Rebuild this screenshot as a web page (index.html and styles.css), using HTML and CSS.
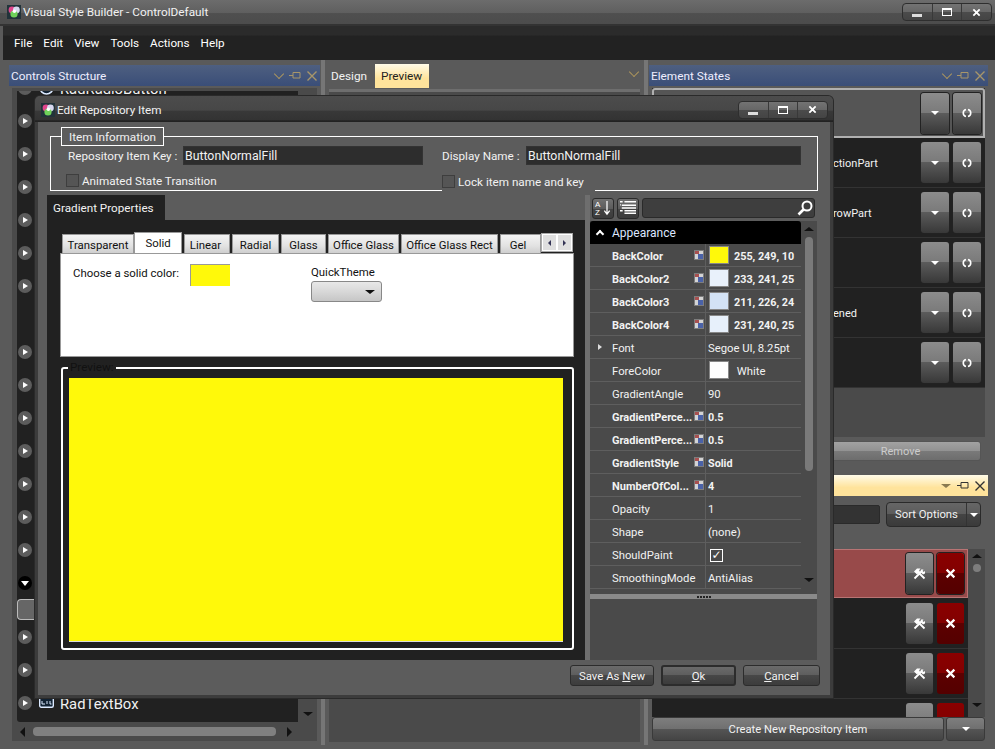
FILE: index.html
```html
<!DOCTYPE html>
<html lang="en">
<head>
<meta charset="UTF-8" />
<title>Visual Style Builder - ControlDefault</title>
<link rel="stylesheet" href="styles.css">
</head>
<body>
  <svg class="sprite" aria-hidden="true">
    <symbol id="i-logo" viewBox="0 0 14 14">
      <rect width="14" height="14" fill="#22333a"/>
      <circle cx="5" cy="5" r="3.4" fill="#e0458c"/>
      <circle cx="9.4" cy="5" r="3.4" fill="#d8d8f0"/>
      <circle cx="7" cy="9" r="3.6" fill="#6fd25a"/>
      <circle cx="7.4" cy="6.2" r="1.8" fill="#ffffff"/>
    </symbol>
    <symbol id="i-refresh" viewBox="0 0 10 10">
      <path d="M4 1.5 A3.6 3.6 0 0 0 4 8.5 M6 1.5 A3.6 3.6 0 0 1 6 8.5" fill="none" stroke="#fff" stroke-width="1.6"/>
    </symbol>
    <symbol id="i-tools" viewBox="0 0 13 12">
      <path d="M1.5 10.5 9 3M4.5 3.5 11.5 10.5" stroke="#fff" stroke-width="1.8" fill="none"/>
      <path d="M1 3.5 4 0.5H7.5L6 2.5 7 3.5 4 6.5Z" fill="#fff"/>
      <path d="M8 1.5H10.5L9.5 3 10.5 4 12 3V5.5L10 6.5 7.5 4Z" fill="#fff"/>
    </symbol>
    <symbol id="i-close" viewBox="0 0 10 10">
      <path d="M1.5 1.5 8.5 8.5M8.5 1.5 1.5 8.5" stroke="#fff" stroke-width="2" fill="none"/>
    </symbol>
    <symbol id="i-flag" viewBox="0 0 10 10">
      <rect x="0" y="0" width="10" height="10" fill="#7d7d7d"/>
      <rect x="1" y="1" width="8" height="8" fill="#d4d4d4"/>
      <rect x="1" y="1" width="4" height="3" fill="#a85050"/>
      <rect x="4" y="4" width="5" height="5" fill="#4a62a8"/>
    </symbol>
    <symbol id="i-pin" viewBox="0 0 12 9">
      <path d="M0 4.5H4M4 1.5H11V7H4Z" fill="none" stroke="currentColor"/>
    </symbol>
    <symbol id="i-x" viewBox="0 0 10 10">
      <path d="M0.5 0.5 9.5 9.5M9.5 0.5 0.5 9.5" fill="none" stroke="currentColor" stroke-width="1.4"/>
    </symbol>
    <symbol id="i-search" viewBox="0 0 16 16">
      <circle cx="10" cy="6" r="4.5" fill="none" stroke="#fff" stroke-width="2"/>
      <path d="M6.5 9.5 1.5 14.5" stroke="#fff" stroke-width="2.6"/>
    </symbol>
    <symbol id="i-cats" viewBox="0 0 20 18">
      <path d="M1 2H4M6 2H19M3 6H19M3 9H19M1 5.5H2M6 12H19M6 15H19M1 12H4" stroke="#fff" stroke-width="1.6" fill="none"/>
    </symbol>
    <symbol id="i-box" viewBox="0 0 15 11">
      <rect x="0.7" y="0.7" width="13.6" height="9.6" rx="1.5" fill="#123" stroke="#dbe9ff" stroke-width="1.4"/>
      <path d="M3 4V7H6M8 4V7M11 4V7H12.5" fill="none" stroke="#dbe9ff"/>
    </symbol>
    <symbol id="i-radio" viewBox="0 0 15 15">
      <circle cx="7.5" cy="7.5" r="6.5" fill="#123" stroke="#dbe9ff" stroke-width="1.6"/>
      <circle cx="7.5" cy="7.5" r="3" fill="#4a90d8"/>
    </symbol>
  </svg>

  <div class="app">
    <header class="titlebar">
      <svg class="logo"><use href="#i-logo"/></svg>
      <span class="title-text">Visual Style Builder - ControlDefault</span>
      <div class="winbtns">
        <span class="winbtn"><i class="glyph-min"></i></span>
        <span class="winbtn"><i class="glyph-max"></i></span>
        <span class="winbtn"><svg class="glyph-close"><use href="#i-close"/></svg></span>
      </div>
    </header>

    <nav class="menubar">
      <span>File</span><span>Edit</span><span>View</span><span>Tools</span><span>Actions</span><span>Help</span>
    </nav>

    <main class="workspace">
      <section class="panel panel-left">
        <div class="dock-head">
          <span>Controls Structure</span>
          <span class="dock-tools"><i class="chev"></i><svg class="pin"><use href="#i-pin"/></svg><svg class="xmark"><use href="#i-x"/></svg></span>
        </div>
        <div class="pane">
          <div class="tree-wrap">
            <div class="tree">
              <div class="tree-row"><i class="expander"></i><svg class="tree-icon radio"><use href="#i-radio"/></svg><span>RadRadioButton</span></div>
              <div class="tree-row"><i class="expander"></i></div>
              <div class="tree-row"><i class="expander"></i></div>
              <div class="tree-row"><i class="expander"></i></div>
              <div class="tree-row"><i class="expander"></i></div>
              <div class="tree-row"><i class="expander"></i></div>
              <div class="tree-row"><i class="expander"></i></div>
              <div class="tree-row"></div>
              <div class="tree-row"><i class="expander"></i></div>
              <div class="tree-row"><i class="expander"></i></div>
              <div class="tree-row"><i class="expander"></i></div>
              <div class="tree-row"><i class="expander"></i></div>
              <div class="tree-row"><i class="expander"></i></div>
              <div class="tree-row"><i class="expander"></i></div>
              <div class="tree-row"><i class="expander"></i></div>
              <div class="tree-row"><i class="expander open"></i></div>
              <div class="tree-row short"><i class="tree-sel"></i></div>
              <div class="tree-row"><i class="expander"></i></div>
              <div class="tree-row"><i class="expander"></i></div>
              <div class="tree-row"><i class="expander"></i><svg class="tree-icon"><use href="#i-box"/></svg><span>RadTextBox</span></div>
            </div>
            <div class="tree-scroll"><i class="arrow-down dark"></i></div>
          </div>
          <div class="hscroll"><i class="arrow-left"></i><i class="hthumb"></i><i class="arrow-right"></i></div>
        </div>
      </section>
      <div class="splitter"></div>

      <section class="panel panel-center">
        <div class="doc-tabs">
          <span class="doc-tab">Design</span>
          <span class="doc-tab active">Preview</span>
          <i class="chev doc-chev"></i>
        </div>
        <div class="doc-pane"></div>
      </section>
      <div class="splitter"></div>

      <section class="panel panel-right">
        <div class="dock-head">
          <span>Element States</span>
          <span class="dock-tools"><i class="chev"></i><svg class="pin"><use href="#i-pin"/></svg><svg class="xmark"><use href="#i-x"/></svg></span>
        </div>
        <div class="states">
          <div class="state-row selected"><span class="state-name"></span><span class="tile"><i class="arrow-white"></i></span><span class="tile"><svg class="ico-refresh"><use href="#i-refresh"/></svg></span></div>
          <div class="state-row"><span class="state-name">ctionPart</span><span class="tile"><i class="arrow-white"></i></span><span class="tile"><svg class="ico-refresh"><use href="#i-refresh"/></svg></span></div>
          <div class="state-row"><span class="state-name">rowPart</span><span class="tile"><i class="arrow-white"></i></span><span class="tile"><svg class="ico-refresh"><use href="#i-refresh"/></svg></span></div>
          <div class="state-row"><span class="state-name"></span><span class="tile"><i class="arrow-white"></i></span><span class="tile"><svg class="ico-refresh"><use href="#i-refresh"/></svg></span></div>
          <div class="state-row"><span class="state-name">ened</span><span class="tile"><i class="arrow-white"></i></span><span class="tile"><svg class="ico-refresh"><use href="#i-refresh"/></svg></span></div>
          <div class="state-row"><span class="state-name"></span><span class="tile"><i class="arrow-white"></i></span><span class="tile"><svg class="ico-refresh"><use href="#i-refresh"/></svg></span></div>
        </div>
        <div class="states-foot"></div>
        <span class="remove-btn">Remove</span>

        <div class="dock-head cream">
          <span></span>
          <span class="dock-tools"><i class="arrow-down gold"></i><svg class="pin"><use href="#i-pin"/></svg><svg class="xmark"><use href="#i-x"/></svg></span>
        </div>
        <div class="sort-bar">
          <span class="sort-input"></span>
          <span class="sort-btn"><span class="sort-label">Sort Options</span><span class="sort-drop"><i class="arrow-white"></i></span></span>
        </div>
        <div class="repo">
          <div class="repo-list">
            <div class="repo-row selected"><span class="repo-name"></span><span class="tile tool"><svg class="ico-tools"><use href="#i-tools"/></svg></span><span class="tile del"><svg class="ico-del"><use href="#i-close"/></svg></span></div>
            <div class="repo-row"><span class="repo-name"></span><span class="tile tool"><svg class="ico-tools"><use href="#i-tools"/></svg></span><span class="tile del"><svg class="ico-del"><use href="#i-close"/></svg></span></div>
            <div class="repo-row"><span class="repo-name"><i class="sliver"></i></span><span class="tile tool"><svg class="ico-tools"><use href="#i-tools"/></svg></span><span class="tile del"><svg class="ico-del"><use href="#i-close"/></svg></span></div>
            <div class="repo-row"><span class="repo-name"><i class="peach"></i></span><span class="tile tool"></span><span class="tile del"></span></div>
          </div>
          <div class="repo-scroll"><i class="arrow-up dark"></i><i class="repo-thumb"></i><i class="arrow-down dark end"></i></div>
        </div>
        <div class="create-bar">
          <span class="create-btn">Create New Repository Item</span>
          <span class="create-drop"><i class="arrow-white"></i></span>
        </div>
      </section>
    </main>

    <section class="dialog" aria-label="Edit Repository Item">
      <div class="dialog-title">
        <svg class="logo"><use href="#i-logo"/></svg>
        <span>Edit Repository Item</span>
        <div class="winbtns">
          <span class="winbtn"><i class="glyph-min"></i></span>
          <span class="winbtn"><i class="glyph-max"></i></span>
          <span class="winbtn"><svg class="glyph-close"><use href="#i-close"/></svg></span>
        </div>
      </div>
      <div class="dialog-body">
        <div class="group">
          <span class="legend">Item Information</span>
          <div class="group-row">
            <label class="lbl-key">Repository Item Key :</label>
            <span class="field field-key">ButtonNormalFill</span>
            <label class="lbl-name">Display Name :</label>
            <span class="field field-name">ButtonNormalFill</span>
          </div>
          <div class="group-row checks">
            <span class="check-item first"><i class="check"></i>Animated State Transition</span>
            <span class="check-item lock"><i class="check"></i>Lock item name and key</span>
          </div>
        </div>

        <div class="editor">
          <div class="grad-side">
            <div class="grad-tabhead"><span>Gradient Properties</span></div>
            <div class="grad-panel">
              <div class="tabs">
                <span class="tab w-transparent">Transparent</span>
                <span class="tab active w-solid">Solid</span>
                <span class="tab w-linear">Linear</span>
                <span class="tab w-radial">Radial</span>
                <span class="tab w-glass">Glass</span>
                <span class="tab w-office">Office Glass</span>
                <span class="tab w-rect">Office Glass Rect</span>
                <span class="tab w-gel">Gel</span>
                <span class="tab-nav"><i><b class="tri-l"></b></i><i><b class="tri-r"></b></i></span>
              </div>
              <div class="tab-page">
                <div class="solid-pick"><span>Choose a solid color:</span><i class="swatch-big"></i></div>
                <div class="quick">
                  <span>QuickTheme</span>
                  <span class="combo"><i class="arrow-down dark"></i></span>
                </div>
              </div>
              <div class="preview">
                <span class="preview-legend">Preview:</span>
                <div class="preview-fill"></div>
              </div>
            </div>
          </div>

          <div class="grid-side">
            <div class="grid-tools">
              <span class="tool-btn">
                <svg viewBox="0 0 20 18">
                  <text x="1" y="8" font-size="9" font-family="Liberation Sans" fill="#fff">A</text>
                  <text x="1" y="17" font-size="9" font-family="Liberation Sans" fill="#fff">Z</text>
                  <path d="M14.5 1V15M11.5 12 14.5 16 17.5 12" fill="none" stroke="#fff" stroke-width="1.4"/>
                </svg>
              </span>
              <span class="tool-btn"><svg><use href="#i-cats"/></svg></span>
              <span class="grid-search"><svg><use href="#i-search"/></svg></span>
            </div>
            <div class="grid-main">
              <div class="grid-rows">
                <div class="cat"><i class="cat-caret"></i>Appearance</div>
                <div class="prop bold"><span class="p-name">BackColor</span><svg class="flag"><use href="#i-flag"/></svg><span class="p-val"><i class="sw c-yellow"></i>255, 249, 10</span></div>
                <div class="prop bold"><span class="p-name">BackColor2</span><svg class="flag"><use href="#i-flag"/></svg><span class="p-val"><i class="sw c-b2"></i>233, 241, 25</span></div>
                <div class="prop bold"><span class="p-name">BackColor3</span><svg class="flag"><use href="#i-flag"/></svg><span class="p-val"><i class="sw c-b3"></i>211, 226, 24</span></div>
                <div class="prop bold"><span class="p-name">BackColor4</span><svg class="flag"><use href="#i-flag"/></svg><span class="p-val"><i class="sw c-b4"></i>231, 240, 25</span></div>
                <div class="prop"><i class="prop-caret"></i><span class="p-name">Font</span><span class="p-val">Segoe UI, 8.25pt</span></div>
                <div class="prop"><span class="p-name">ForeColor</span><span class="p-val"><i class="sw c-white"></i>&nbsp;White</span></div>
                <div class="prop"><span class="p-name">GradientAngle</span><span class="p-val">90</span></div>
                <div class="prop bold"><span class="p-name">GradientPerce...</span><svg class="flag"><use href="#i-flag"/></svg><span class="p-val">0.5</span></div>
                <div class="prop bold"><span class="p-name">GradientPerce...</span><svg class="flag"><use href="#i-flag"/></svg><span class="p-val">0.5</span></div>
                <div class="prop bold"><span class="p-name">GradientStyle</span><svg class="flag"><use href="#i-flag"/></svg><span class="p-val">Solid</span></div>
                <div class="prop bold"><span class="p-name">NumberOfCol...</span><svg class="flag"><use href="#i-flag"/></svg><span class="p-val">4</span></div>
                <div class="prop"><span class="p-name">Opacity</span><span class="p-val">1</span></div>
                <div class="prop"><span class="p-name">Shape</span><span class="p-val">(none)</span></div>
                <div class="prop"><span class="p-name">ShouldPaint</span><span class="p-val"><i class="tick">&#10003;</i></span></div>
                <div class="prop"><span class="p-name">SmoothingMode</span><span class="p-val">AntiAlias</span></div>
              </div>
              <div class="grid-scroll"><i class="arrow-up dark"></i><i class="grid-thumb"></i><i class="arrow-down dark end"></i></div>
            </div>
            <div class="grid-split"><i></i><i></i><i></i><i></i><i></i></div>
          </div>
        </div>

        <div class="dialog-foot">
          <span class="dlg-btn w-save">Save As <u>N</u>ew</span>
          <span class="dlg-btn w-ok"><u>O</u>k</span>
          <span class="dlg-btn w-cancel"><u>C</u>ancel</span>
        </div>
      </div>
    </section>
  </div>
</body>
</html>
```

FILE: styles.css
```css
/* Base */
*, *::before, *::after {
  box-sizing: border-box;
}
html, body {
  margin: 0;
  padding: 0;
  width: 995px;
  height: 749px;
  overflow: hidden;
  font-family: Roboto, "Noto Sans", sans-serif;
  font-size: 11.7px;
  color: #f2f2f2;
  background: #5a5a5a;
}
i {
  display: block;
  font-style: normal;
}
.sprite {
  position: absolute;
  width: 0;
  height: 0;
}
.app {
  position: relative;
  width: 995px;
  height: 749px;
  display: flex;
  flex-direction: column;
}

/* Title bar */
.titlebar {
  height: 26px;
  flex: none;
  display: flex;
  align-items: center;
  padding: 0 3px 2px 7px;
  font-size: 11.8px;
  background: linear-gradient(#6c6c6c, #5f5f5f 50%, #4f4f4f 52%, #4c4c4c 92%, #333 94%);
}
.logo {
  width: 14px;
  height: 14px;
  margin-right: 2px;
  flex: none;
}
.title-text {
  flex: 1;
}
.winbtns {
  display: flex;
  width: 90px;
  height: 18px;
  border: 1px solid #2e2e2e;
  border-radius: 4px;
  background: linear-gradient(#737373, #666 50%, #4b4b4b 52%, #444);
  overflow: hidden;
}
.winbtn {
  flex: 1;
  display: flex;
  align-items: center;
  justify-content: center;
  border-right: 1px solid #393939;
}
.winbtn:last-child {
  border-right: 0;
}
.glyph-min {
  width: 10px;
  height: 3px;
  margin-top: 7px;
  background: #ddd;
}
.glyph-max {
  width: 10px;
  height: 8px;
  border: 1px solid #fff;
  border-top-width: 2px;
}
.glyph-close {
  width: 9px;
  height: 9px;
}

/* Menu */
.menubar {
  height: 34px;
  flex: none;
  display: flex;
  align-items: center;
  gap: 11px;
  padding: 0 0 0 11px;
  margin-left: 3px;
  font-size: 11.7px;
  background: linear-gradient(#2b2b2b 26%, #222 30%);
  color: #fff;
}

/* Docked panels */
.workspace {
  flex: 1;
  display: flex;
  min-height: 0;
}
.panel {
  display: flex;
  flex-direction: column;
  padding-top: 5px;
}
.panel-left {
  width: 321px;
  padding-left: 9px;
  padding-right: 1px;
}
.panel-center {
  width: 319px;
  padding-top: 4px;
}
.panel-right {
  flex: 1;
  padding-left: 1px;
  padding-right: 7px;
}
.splitter {
  width: 4px;
  height: 685px;
  flex: none;
  background: #767676;
}
.dock-head {
  height: 21px;
  flex: none;
  display: flex;
  align-items: center;
  justify-content: space-between;
  padding: 0 3px 0 2px;
  font-size: 11.8px;
  background: linear-gradient(#4e5f80, #3a4e78);
  color: #eef;
}
.dock-head.cream {
  margin: 14px 0 0 0;
  background: linear-gradient(#fffbe8, #ffe39b 60%);
}
.dock-tools {
  display: flex;
  align-items: center;
  gap: 6px;
  color: #a8966a;
}
.cream .dock-tools {
  color: #333;
}
.chev {
  width: 8px;
  height: 8px;
  margin-top: -4px;
  border-right: 1.5px solid #b39a5c;
  border-bottom: 1.5px solid #b39a5c;
  transform: rotate(45deg) scale(0.9);
}
.pin {
  width: 12px;
  height: 9px;
}
.xmark {
  width: 10px;
  height: 10px;
}

/* Left tree */
.pane {
  flex: none;
  height: 653px;
  margin: 2px 3px 0 3px;
  padding: 3px 0 0 5px;
  background: #4a4a4a;
  display: flex;
  flex-direction: column;
}
.tree-wrap {
  height: 631px;
  flex: none;
  display: flex;
}
.tree {
  width: 281px;
  background: #212121;
  overflow: hidden;
  border-radius: 0 0 0 3px;
}
.tree-row {
  height: 33px;
  display: flex;
  align-items: center;
  gap: 3px;
  padding-left: 1px;
  font-size: 14.8px;
  line-height: 1;
}
.tree-row span {
  margin-top: 3px;
}
.tree-row:first-child {
  margin-top: -20px;
}
.tree-row.short {
  height: 21px;
}
.expander {
  width: 14px;
  height: 14px;
  flex: none;
  border-radius: 50%;
  background: #5c5c5c;
  position: relative;
}
.expander::after {
  content: "";
  position: absolute;
  left: 5px;
  top: 4px;
  border-left: 5px solid #fff;
  border-top: 3px solid transparent;
  border-bottom: 3px solid transparent;
}
.expander.open {
  background: #000;
}
.expander.open::after {
  left: 3px;
  top: 5px;
  border-top: 5px solid #fff;
  border-left: 4px solid transparent;
  border-right: 4px solid transparent;
  border-bottom: 0;
}
.tree-sel {
  width: 18px;
  height: 21px;
  border: 1px solid #bbb;
  border-right: 0;
  border-radius: 4px 0 0 4px;
  background: #666;
  margin-left: -1px;
}
.tree-icon {
  width: 15px;
  height: 11px;
  margin-left: 4px;
  margin-right: 3px;
}
.tree-icon.radio {
  height: 15px;
}
.tree-scroll {
  flex: 1;
  display: flex;
  align-items: flex-end;
  justify-content: center;
  padding-bottom: 6px;
}
.hscroll {
  height: 19px;
  display: flex;
  align-items: center;
  gap: 7px;
  padding-left: 3px;
}
.hthumb {
  width: 243px;
  height: 9px;
  border-radius: 4px;
  background: #808080;
  margin-left: 1px;
}
.arrow-left {
  border-right: 5px solid #111;
  border-top: 5px solid transparent;
  border-bottom: 5px solid transparent;
}
.arrow-right {
  margin-left: 4px;
  border-left: 5px solid #111;
  border-top: 5px solid transparent;
  border-bottom: 5px solid transparent;
}
.arrow-down {
  flex: none;
  border-top: 4px solid #fff;
  border-left: 5px solid transparent;
  border-right: 5px solid transparent;
}
.arrow-up {
  flex: none;
  border-bottom: 4px solid #fff;
  border-left: 5px solid transparent;
  border-right: 5px solid transparent;
}
.arrow-down.dark {
  border-top-color: #111;
}
.arrow-down.gold {
  border-top-color: #8a7a50;
}
.arrow-up.dark {
  border-bottom-color: #111;
}
.arrow-white {
  border-top: 4px solid #fff;
  border-left: 4px solid transparent;
  border-right: 4px solid transparent;
}

/* Center document */
.doc-tabs {
  height: 24px;
  flex: none;
  display: flex;
  align-items: stretch;
  font-size: 11.8px;
}
.doc-tab {
  display: flex;
  align-items: center;
  padding: 0 6px;
  width: 50px;
}
.doc-tab.active {
  width: 54px;
  color: #222;
  background: linear-gradient(#fffbe8, #ffe39b 60%);
}
.doc-chev {
  margin: 4px 0 0 201px;
}
.doc-pane {
  flex: none;
  height: 653px;
  margin: 1px 4px 0 4px;
  border-top: 3px solid #6e6e6e;
  background: #4a4a4a;
}

/* Element states */
.states {
  flex: none;
  margin: 2px 3px 0 3px;
  background: #212121;
}
.state-row {
  height: 50px;
  display: flex;
  align-items: center;
  gap: 4px;
  padding-right: 4px;
  border-bottom: 1px solid #333;
}
.state-row.selected {
  background: #555;
  border: 2px solid #b0b0b0;
  border-radius: 3px 3px 0 0;
  padding-right: 2px;
}
.state-name {
  flex: 1;
  padding: 1px 0 0 181px;
  font-size: 11px;
  white-space: nowrap;
}
.tile {
  width: 28px;
  height: 41px;
  flex: none;
  display: flex;
  align-items: center;
  justify-content: center;
  border-radius: 3px;
  background: linear-gradient(#8c8c8c, #7a7a7a 48%, #5b5b5b 50%, #383838);
  box-shadow: 0 0 0 1px #222;
}
.ico-refresh {
  width: 10px;
  height: 10px;
}
.states-foot {
  flex: none;
  height: 49px;
  margin: 0 3px;
  background: #4a4a4a;
}
.remove-btn {
  flex: none;
  display: flex;
  height: 20px;
  margin: 4px 7px 0 3px;
  align-items: center;
  justify-content: center;
  padding-left: 168px;
  font-size: 11px;
  color: #ccc;
  border: 1px solid #555;
  border-radius: 3px;
  background: linear-gradient(#a2a2a2, #929292 48%, #7a7a7a 50%, #6d6d6d);
}
.sort-bar {
  flex: none;
  height: 25px;
  margin: 6px 7px 0 3px;
  display: flex;
  align-items: center;
  gap: 6px;
}
.sort-input {
  flex: 1;
  height: 19px;
  background: #333;
  border: 1px solid #2a2a2a;
  border-radius: 2px;
}
.sort-btn {
  width: 95px;
  height: 25px;
  flex: none;
  display: flex;
  border: 1px solid #2a2a2a;
  border-radius: 4px;
  overflow: hidden;
  font-size: 11.3px;
  background: linear-gradient(#666, #5c5c5c 48%, #444 50%, #3a3a3a);
}
.sort-label {
  flex: 1;
  display: flex;
  align-items: center;
  justify-content: center;
  border-right: 1px solid #333;
}
.sort-drop {
  width: 13px;
  display: flex;
  align-items: center;
  justify-content: center;
}
.repo {
  flex: none;
  height: 168px;
  margin: 22px 3px 0 3px;
  display: flex;
  background: #4a4a4a;
  overflow: hidden;
}
.repo-list {
  flex: 1;
  background: #212121;
}
.repo-row {
  height: 50px;
  display: flex;
  align-items: center;
  gap: 4px;
  padding-right: 4px;
  border-bottom: 1px solid #333;
}
.repo-row.selected {
  height: 49px;
  margin-bottom: 1px;
  background: #984a4a;
  border: 1px solid #b87474;
  border-left: 0;
  padding-right: 3px;
}
.repo-name {
  flex: 1;
  padding-left: 181px;
}
.tile.tool {
  width: 27px;
}
.tile.del {
  width: 27px;
  background: linear-gradient(#8a0000, #820000 48%, #5c0000 50%, #540000);
}
.ico-tools {
  width: 13px;
  height: 12px;
}
.ico-del {
  width: 11px;
  height: 11px;
}
.sliver {
  width: 1px;
  height: 9px;
  background: #ffc890;
}
.peach {
  width: 25px;
  height: 8px;
  margin: 8px 0 0 -175px;
  background: #ffc890;
}
.repo-scroll {
  width: 17px;
  flex: none;
  display: flex;
  flex-direction: column;
  align-items: center;
  padding-top: 5px;
}
.repo-thumb {
  width: 8px;
  height: 8px;
  margin-top: 6px;
  border-radius: 50%;
  background: #7d7d7d;
}
.repo-scroll .end {
  margin-top: 131px;
}
.create-bar {
  flex: none;
  height: 24px;
  margin-left: 3px;
  margin-right: 3px;
  display: flex;
  gap: 2px;
  font-size: 11.2px;
}
.create-btn, .create-drop {
  display: flex;
  align-items: center;
  justify-content: center;
  border-radius: 3px;
  background: linear-gradient(#7e7e7e, #707070 48%, #555 50%, #444);
  border: 1px solid #3a3a3a;
}
.create-btn {
  width: 292px;
}
.create-drop {
  flex: 1;
}

/* Dialog floats over the docked panels */
.dialog {
  position: absolute;
  left: 35px;
  top: 96px;
  width: 798px;
  height: 602px;
  display: flex;
  flex-direction: column;
  background: #3c3c3c;
  border-radius: 5px 5px 0 0;
  padding: 0 3px 3px 3px;
  box-shadow: 0 0 0 1px #2a2a2a;
}
.dialog-title {
  height: 26px;
  flex: none;
  margin: 0 -3px;
  display: flex;
  align-items: center;
  padding: 1px 5px 0 6px;
  font-size: 11.7px;
  background: linear-gradient(#4c4c4c, #474747 55%, #383838 57%, #333 92%, #222 95%);
  border-radius: 5px 5px 0 0;
}
.dialog-title > span {
  flex: 1;
}
.dialog-body {
  flex: 1;
  min-height: 0;
  background: #5c5c5c;
  padding: 14px 10px 0 9px;
  display: flex;
  flex-direction: column;
}

/* Item information group */
.group {
  position: relative;
  flex: none;
  height: 55px;
  margin-left: 3px;
  margin-right: 2px;
  padding: 9px 0 0 0;
  border: 1px solid #fff;
}
.legend {
  position: absolute;
  left: 10px;
  top: -10px;
  width: 103px;
  height: 19px;
  display: flex;
  align-items: center;
  justify-content: center;
  border: 1px solid #fff;
  background: #5c5c5c;
}
.group-row {
  display: flex;
  align-items: center;
}
.lbl-key {
  width: 132px;
  padding-left: 17px;
}
.field {
  height: 19px;
  display: flex;
  align-items: center;
  padding-left: 1px;
  font-size: 12.3px;
  background: #2d2d2d;
  border: 1px solid #333;
}
.field-key {
  width: 240px;
}
.lbl-name {
  width: 103px;
  padding-left: 19px;
}
.field-name {
  width: 275px;
}
.checks {
  margin-top: 8px;
  align-items: flex-start;
}
.check-item {
  display: flex;
  align-items: center;
  gap: 3px;
}
.check-item.first {
  width: 391px;
  padding-left: 15px;
  height: 15px;
}
.check-item.lock {
  width: 153px;
  height: 18px;
  padding-top: 2px;
  align-items: flex-start;
  background: #5c5c5c;
}
.check {
  width: 13px;
  height: 13px;
  flex: none;
  background: #555;
  border: 1px solid #3e3e3e;
}

/* Editor area */
.editor {
  flex: none;
  height: 465px;
  margin-top: 4px;
  display: flex;
  gap: 5px;
}
.grad-side {
  width: 538px;
  flex: none;
  display: flex;
  flex-direction: column;
}
.grad-tabhead {
  height: 25px;
  flex: none;
}
.grad-tabhead span {
  display: flex;
  align-items: center;
  width: 118px;
  height: 25px;
  padding-left: 6px;
  background: #212121;
}
.grad-panel {
  flex: 1;
  background: #212121;
  padding: 13px 11px 10px 13px;
}
.tabs {
  height: 20px;
  display: flex;
  align-items: flex-end;
  margin-left: 2px;
  color: #111;
  font-size: 11.4px;
}
.tab {
  height: 19px;
  margin-right: 2px;
  padding-top: 2px;
  display: flex;
  align-items: center;
  justify-content: center;
  background: linear-gradient(#f4f4f4, #e2e2e2 60%, #cfcfcf);
  border: 1px solid #999;
  border-bottom: 0;
}
.tab.active {
  height: 21px;
  margin: 0 2px 0 -2px;
  padding-top: 0;
  background: #fff;
  position: relative;
  z-index: 1;
}
.w-transparent { width: 72px; }
.w-solid { width: 48px; }
.w-linear { width: 46px; padding-right: 3px; }
.w-radial { width: 47px; }
.w-glass { width: 45px; }
.w-office { width: 71px; }
.w-rect { width: 97px; }
.w-gel { width: 41px; margin-right: 0; padding-right: 5px; }
.tab-nav {
  width: 32px;
  height: 19px;
  align-self: flex-start;
  display: flex;
  gap: 2px;
  padding: 1px;
  background: #fff;
  border: 1px solid #aaa;
}
.tab-nav i {
  flex: 1;
  display: flex;
  align-items: center;
  justify-content: center;
  background: #dfdfdf;
}
.tri-l {
  border-right: 3px solid #335;
  border-top: 3px solid transparent;
  border-bottom: 3px solid transparent;
}
.tri-r {
  border-left: 3px solid #335;
  border-top: 3px solid transparent;
  border-bottom: 3px solid transparent;
}
.tab-page {
  height: 104px;
  display: flex;
  background: #fff;
  border: 1px solid #999;
  color: #111;
  font-size: 11.4px;
  padding: 10px 0 0 12px;
}
.solid-pick {
  width: 238px;
  flex: none;
  display: flex;
  gap: 11px;
}
.solid-pick span {
  padding-top: 2px;
}
.swatch-big {
  width: 40px;
  height: 22px;
  background: #fff90a;
  border: 1px solid #999;
  border-right: 0;
  border-bottom: 0;
}
.quick {
  display: flex;
  flex-direction: column;
  gap: 2px;
  margin-top: 1px;
}
.combo {
  width: 71px;
  height: 21px;
  display: flex;
  align-items: center;
  justify-content: flex-end;
  padding-right: 6px;
  border: 1px solid #888;
  border-radius: 3px;
  background: linear-gradient(#e8e8e8, #d8d8d8 50%, #c6c6c6);
}
.preview {
  position: relative;
  width: 513px;
  height: 283px;
  margin: 10px 0 0 1px;
  padding: 9px 9px 7px 6px;
  border: 2px solid #fff;
  border-radius: 3px;
}
.preview-legend {
  position: absolute;
  left: 5px;
  top: -8px;
  padding: 0 2px;
  background: #212121;
  color: #111;
  line-height: 12px;
}
.preview-fill {
  width: 494px;
  height: 264px;
  background: #fff90a;
  border: 1px solid #ddd;
  border-width: 0 0 1px 0;
}

/* Property grid */
.grid-side {
  width: 232px;
  flex: none;
  background: #4a4a4a;
  border-left: 5px solid #6e6e6e;
  margin-left: -5px;
}
.grid-tools {
  height: 26px;
  display: flex;
  align-items: center;
  gap: 3px;
  padding: 0 2px 0 2px;
  background: #5c5c5c;
}
.tool-btn {
  width: 22px;
  height: 21px;
  flex: none;
  display: flex;
  align-items: center;
  justify-content: center;
  border-radius: 3px;
  background: linear-gradient(#707070, #5c5c5c 50%, #444 52%, #3c3c3c);
  border: 1px solid #2a2a2a;
}
.tool-btn svg {
  width: 18px;
  height: 16px;
}
.grid-search {
  width: 175px;
  height: 20px;
  display: flex;
  justify-content: flex-end;
  align-items: center;
  padding-right: 1px;
  border-radius: 3px;
  background: #3e3e3e;
  border: 1px solid #2a2a2a;
}
.grid-search svg {
  width: 16px;
  height: 16px;
}
.grid-main {
  display: flex;
  height: 368px;
}
.grid-rows {
  width: 211px;
  flex: none;
}
.cat {
  height: 23px;
  display: flex;
  align-items: center;
  gap: 9px;
  padding-left: 7px;
  background: #000;
  border-radius: 3px 3px 0 0;
  color: #dde6ff;
  font-size: 12px;
}
.cat-caret {
  width: 6px;
  height: 6px;
  margin-top: 3px;
  border-left: 2px solid #fff;
  border-top: 2px solid #fff;
  transform: rotate(45deg);
}
.prop {
  position: relative;
  height: 23px;
  display: flex;
  align-items: center;
  border-bottom: 1px solid #5e5e5e;
  padding: 2px 0 0 22px;
  font-size: 11.3px;
}
.prop.bold .p-name {
  font-weight: 700;
  font-size: 11px;
}
.prop.bold .p-val {
  font-weight: 700;
  font-size: 10.8px;
}
.p-name {
  width: 82px;
  flex: none;
  white-space: nowrap;
}
.prop-caret {
  position: absolute;
  left: 8px;
  top: 8px;
  border-left: 4px solid #ddd;
  border-top: 3px solid transparent;
  border-bottom: 3px solid transparent;
}
.flag {
  width: 10px;
  height: 10px;
  flex: none;
  position: absolute;
  left: 104px;
  top: 6px;
}
.p-val {
  position: absolute;
  left: 115px;
  top: 0;
  bottom: 0;
  right: 0;
  padding: 2px 0 0 2px;
  display: flex;
  align-items: center;
  gap: 5px;
  border-left: 1px solid #5e5e5e;
  white-space: nowrap;
}
.sw {
  width: 20px;
  height: 18px;
  flex: none;
  margin-left: 1px;
  margin-top: -2px;
  border: 1px solid #888;
}
.c-yellow { background: #fff90a; }
.c-b2 { background: #e9f1fb; }
.c-b3 { background: #d3e2f5; }
.c-b4 { background: #e7f0fb; }
.c-white { background: #fff; }
.tick {
  width: 13px;
  height: 13px;
  margin-left: 2px;
  display: flex;
  align-items: center;
  justify-content: center;
  border: 1px solid #fff;
  font-size: 12px;
  font-weight: 700;
  line-height: 1;
  color: #fff;
  font-family: "DejaVu Sans", sans-serif;
}
.grid-scroll {
  flex: 1;
  display: flex;
  flex-direction: column;
  align-items: center;
  padding-top: 6px;
}
.grid-thumb {
  width: 8px;
  height: 234px;
  margin-top: 6px;
  border-radius: 4px;
  background: #7a7a7a;
}
.grid-scroll .end {
  margin-top: 107px;
}
.grid-split {
  height: 5px;
  margin-top: 5px;
  display: flex;
  align-items: center;
  justify-content: center;
  gap: 1px;
  background: #8a8a8a;
}
.grid-split i {
  width: 2px;
  height: 2px;
  background: #222;
}

/* Dialog buttons */
.dialog-foot {
  flex: none;
  display: flex;
  justify-content: flex-end;
  gap: 7px;
  margin-top: 5px;
  font-size: 11.4px;
}
.dlg-btn {
  height: 21px;
  display: flex;
  align-items: center;
  justify-content: center;
  white-space: pre;
  border: 1px solid #2c2c2c;
  border-radius: 3px;
  background: linear-gradient(#6a6a6a, #5e5e5e 48%, #474747 50%, #3c3c3c);
}
.w-save { width: 84px; }
.w-ok { width: 75px; border-width: 2px; }
.w-cancel { width: 77px; }
```
